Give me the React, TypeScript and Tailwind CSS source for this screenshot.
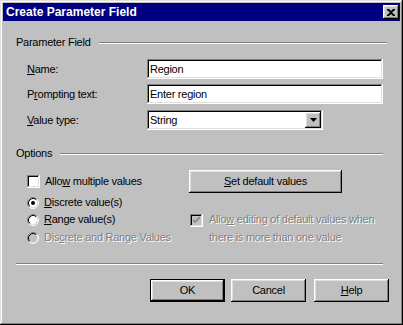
import React from "react";

const raised =
  "shadow-[inset_-1px_-1px_#000000,inset_1px_1px_#ffffff,inset_-2px_-2px_#808080,inset_2px_2px_#dfdfdf]";
const raisedDefault =
  "shadow-[inset_0_0_0_1px_#000000,inset_-2px_-2px_#000000,inset_2px_2px_#ffffff,inset_-3px_-3px_#808080,inset_3px_3px_#dfdfdf]";
const sunken =
  "shadow-[inset_-1px_-1px_#ffffff,inset_1px_1px_#808080,inset_-2px_-2px_#dfdfdf,inset_2px_2px_#000000]";
const disabledText = "text-[#808080] [text-shadow:1px_1px_0_#ffffff]";

function Separator({ className = "" }: { className?: string }) {
  return (
    <div className={"h-[2px] border-t border-t-[#808080] border-b border-b-white " + className} />
  );
}

function GroupHeader({ label, className = "" }: { label: string; className?: string }) {
  return (
    <div className={"flex items-center h-[13px] pl-[13px] " + className}>
      <span className="leading-[13px]">{label}</span>
      <Separator className="flex-1 ml-[8px]" />
    </div>
  );
}

function TextField({ value, width }: { value: string; width: string }) {
  return (
    <div className={"h-[20px] bg-white flex items-center pl-[3px] " + sunken + " " + width}>
      <span className="leading-[13px]">{value}</span>
    </div>
  );
}

function Radio({ checked, disabled }: { checked?: boolean; disabled?: boolean }) {
  return (
    <svg width="12" height="12" viewBox="0 0 12 12" className="shrink-0">
      <circle cx="6" cy="6" r="4.2" fill={disabled ? "#c0c0c0" : "#ffffff"} />
      <path d="M2.11 9.89 A5.5 5.5 0 0 1 9.89 2.11" stroke="#808080" strokeWidth="1" fill="none" />
      <path d="M9.89 2.11 A5.5 5.5 0 0 1 2.11 9.89" stroke="#ffffff" strokeWidth="1" fill="none" />
      <path d="M2.82 9.18 A4.5 4.5 0 0 1 9.18 2.82" stroke="#000000" strokeWidth="1" fill="none" />
      <path d="M9.18 2.82 A4.5 4.5 0 0 1 2.82 9.18" stroke="#dfdfdf" strokeWidth="1" fill="none" />
      {checked && <circle cx="6" cy="6" r="2" fill="#000000" />}
    </svg>
  );
}

function Checkbox({ checked, disabled }: { checked?: boolean; disabled?: boolean }) {
  return (
    <div
      className={
        "w-[13px] h-[13px] shrink-0 flex items-center justify-center " +
        sunken +
        (disabled ? " bg-[#c0c0c0]" : " bg-white")
      }
    >
      {checked && (
        <svg width="7" height="7" viewBox="0 0 7 7">
          <path
            d="M0 2 L0 4 L2 6 L7 1 L7 -1 L2 4 Z"
            fill={disabled ? "#808080" : "#000000"}
          />
        </svg>
      )}
    </div>
  );
}

function Button({
  children,
  isDefault,
  className = "",
}: {
  children: React.ReactNode;
  isDefault?: boolean;
  className?: string;
}) {
  return (
    <div
      className={
        "h-[23px] flex items-center justify-center bg-[#c0c0c0] " +
        (isDefault ? raisedDefault : raised) +
        " " +
        className
      }
    >
      <span className="leading-[13px]">{children}</span>
    </div>
  );
}

export default function App() {
  return (
    <div className="w-[403px] h-[325px] bg-[#c0c0c0] p-[3px] flex flex-col text-[11px] tracking-[-0.25px] text-black font-['Liberation_Sans',Arial,sans-serif] shadow-[inset_-1px_-1px_#000000,inset_1px_1px_#dfdfdf,inset_-2px_-2px_#808080,inset_2px_2px_#ffffff]">
      {/* Title bar */}
      <div className="h-[18px] bg-[#000080] flex items-center justify-between pl-[3px] pr-[1px]">
        <span className="text-white font-bold text-[12px] tracking-normal leading-[14px]">Create Parameter Field</span>
        <div className={"w-[16px] h-[14px] bg-[#c0c0c0] flex items-center justify-center " + raised}>
          <svg width="8" height="7" viewBox="0 0 8 7">
            <path d="M0 0h2l2 2 2-2h2v1L5 3.5 8 6v1H6L4 5 2 7H0V6l3-2.5L0 1z" fill="#000000" />
          </svg>
        </div>
      </div>

      {/* Parameter Field group */}
      <GroupHeader label="Parameter Field" className="mt-[15px] pr-[13px]" />

      <div className="ml-[24px] mt-[10px] flex flex-col">
        <div className="flex items-center h-[20px]">
          <span className="w-[120px] leading-[13px]">
            <u>N</u>ame:
          </span>
          <TextField value="Region" width="w-[236px]" />
        </div>
        <div className="flex items-center h-[20px] mt-[5px]">
          <span className="w-[120px] leading-[13px]">
            P<u>r</u>ompting text:
          </span>
          <TextField value="Enter region" width="w-[236px]" />
        </div>
        <div className="flex items-center h-[20px] mt-[6px]">
          <span className="w-[120px] leading-[13px]">
            <u>V</u>alue type:
          </span>
          <div className={"w-[176px] h-[20px] bg-white flex items-center justify-between pl-[3px] pr-[2px] " + sunken}>
            <span className="leading-[13px]">String</span>
            <div className={"w-[16px] h-[16px] bg-[#c0c0c0] flex items-center justify-center " + raised}>
              <svg width="7" height="4" viewBox="0 0 7 4">
                <path d="M0 0h7L3.5 4z" fill="#000000" />
              </svg>
            </div>
          </div>
        </div>
      </div>

      {/* Options group */}
      <GroupHeader label="Options" className="mt-[17px] pr-[17px]" />

      <div className="flex mt-[10px]">
        <div className="ml-[24px] w-[162px] flex flex-col">
          <div className="h-[23px] flex items-center gap-[5px]">
            <Checkbox />
            <span className="leading-[13px]">
              Allo<u>w</u> multiple values
            </span>
          </div>
          <div className="h-[17px] mt-[1px] flex items-center gap-[5px]">
            <Radio checked />
            <span className="leading-[13px]">
              <u>D</u>iscrete value(s)
            </span>
          </div>
          <div className="h-[17px] flex items-center gap-[5px]">
            <Radio />
            <span className="leading-[13px]">
              <u>R</u>ange value(s)
            </span>
          </div>
          <div className="h-[17px] mt-[1px] flex items-center gap-[5px]">
            <Radio disabled />
            <span className={"leading-[13px] " + disabledText}>
              Dis<u>c</u>rete and Range Values
            </span>
          </div>
        </div>
        <div className="flex flex-col">
          <Button className="w-[153px]">
            <u>S</u>et default values
          </Button>
          <div className="flex items-start mt-[17px] ml-[1px]">
            <div className="mt-[4px]">
              <Checkbox checked disabled />
            </div>
            <span className={"ml-[6px] leading-[18px] " + disabledText}>
              Allo<u>w</u> editing of default values when
              <br />
              there is more than one value
            </span>
          </div>
        </div>
      </div>

      <Separator className="mt-[17px] ml-[13px] mr-[17px]" />

      <div className="flex justify-end mt-[14px] mr-[11px]">
        <Button isDefault className="w-[75px]">
          OK
        </Button>
        <Button className="w-[75px] ml-[6px]">Cancel</Button>
        <Button className="w-[75px] ml-[8px]">
          <u>H</u>elp
        </Button>
      </div>
    </div>
  );
}
